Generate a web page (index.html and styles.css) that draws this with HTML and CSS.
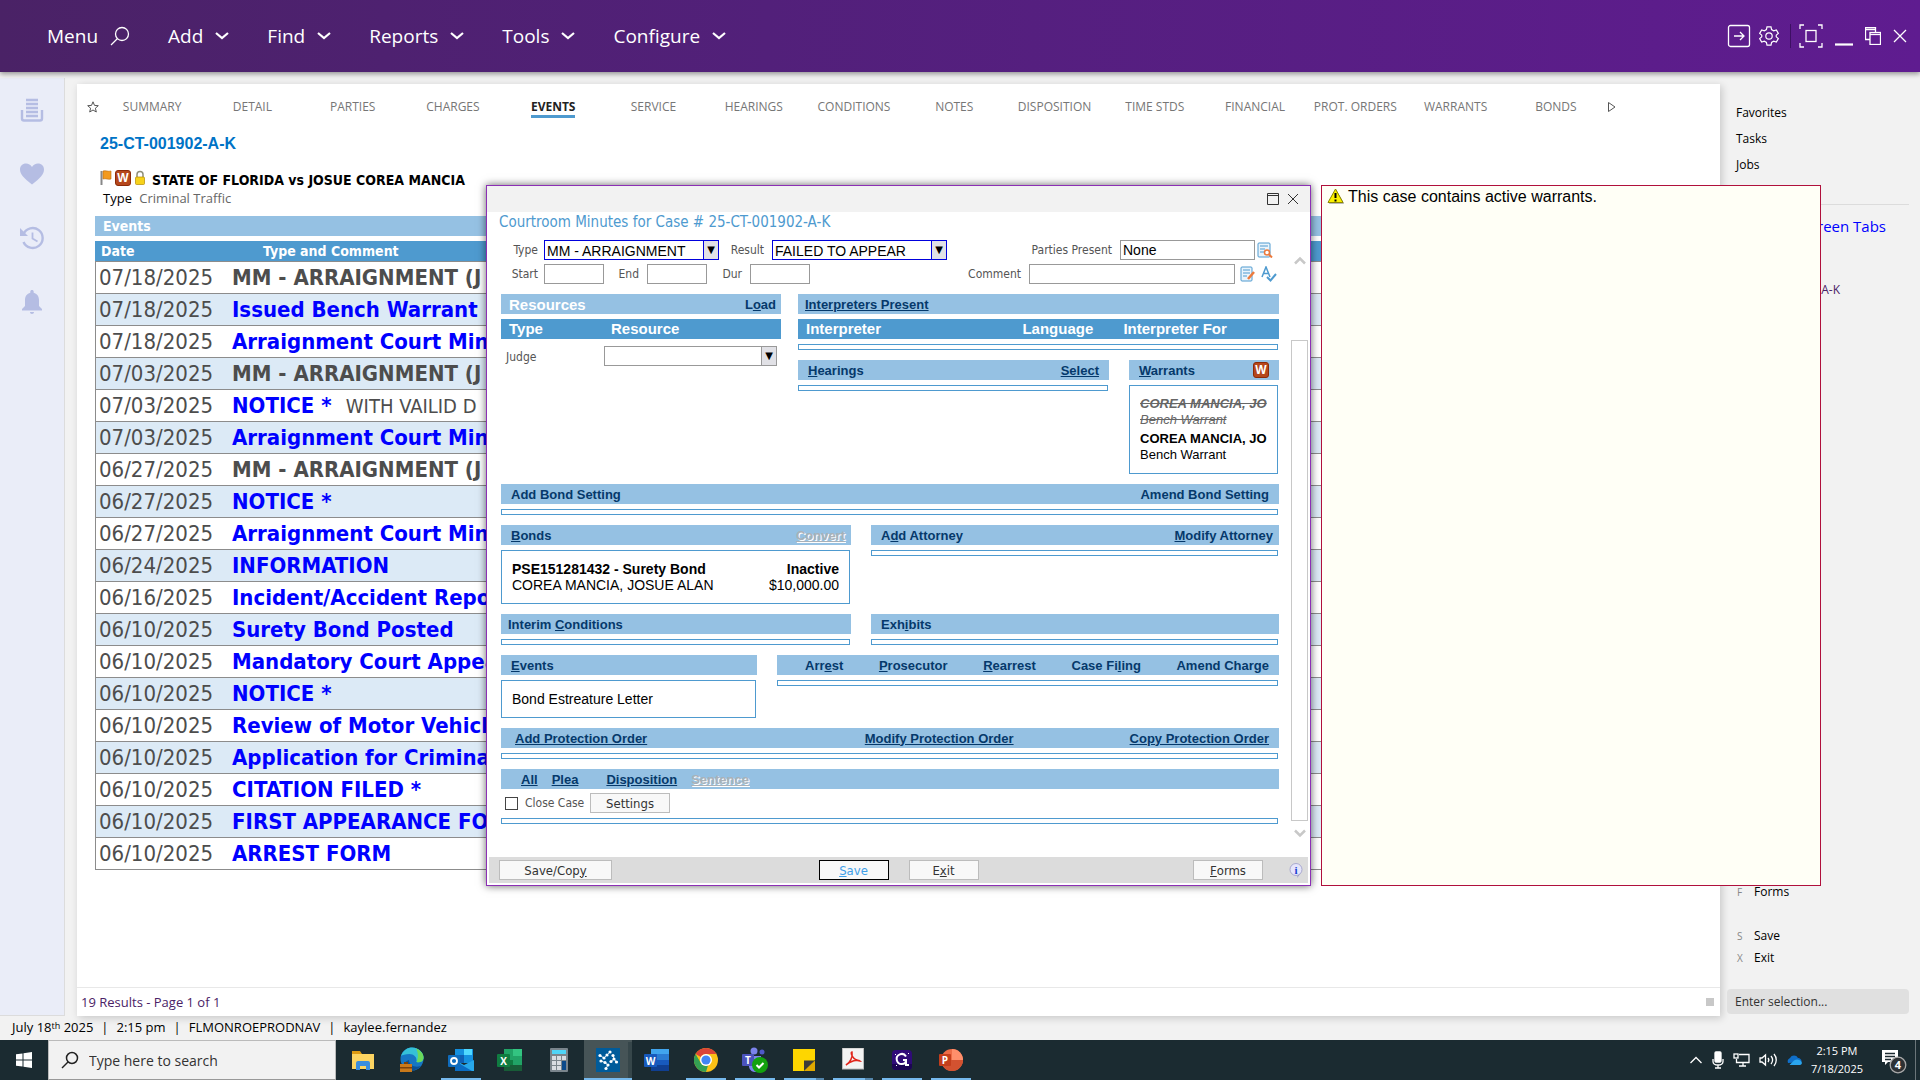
FILE: index.html
```html
<!DOCTYPE html>
<html lang="en">
<head>
    <meta charset="UTF-8">
    <meta name="viewport" content="width=device-width, initial-scale=1.0">
    <title>25-CT-001902-A-K</title>
    <link rel="stylesheet" href="styles.css">
</head>
<body>
    <!-- Top menu -->
    <header class="topbar">
        <nav class="menu">
            <button class="menu-search">Menu
                <svg width="20" height="20" viewBox="0 0 20 20"><circle cx="12" cy="8" r="6.5"/><path d="M7.5 12.5L1 19"/></svg>
            </button>
            <button>Add <svg width="14" height="8" viewBox="0 0 14 8"><path class="thick" d="M1 1l6 5 6-5"/></svg></button>
            <button>Find <svg width="14" height="8" viewBox="0 0 14 8"><path class="thick" d="M1 1l6 5 6-5"/></svg></button>
            <button>Reports <svg width="14" height="8" viewBox="0 0 14 8"><path class="thick" d="M1 1l6 5 6-5"/></svg></button>
            <button>Tools <svg width="14" height="8" viewBox="0 0 14 8"><path class="thick" d="M1 1l6 5 6-5"/></svg></button>
            <button>Configure <svg width="14" height="8" viewBox="0 0 14 8"><path class="thick" d="M1 1l6 5 6-5"/></svg></button>
        </nav>
        <div class="top-tools">
            <button aria-label="Sign out"><svg width="24" height="24" viewBox="0 0 24 24"><rect x="1.5" y="1.5" width="21" height="21" rx="2"/><path d="M7 12h10M13 8l4 4-4 4"/></svg></button>
            <button aria-label="Settings"><svg width="22" height="22" viewBox="0 0 24 24"><circle cx="12" cy="12" r="3.5"/><path d="M9.8 2h4.4l.6 3 2.3 1.3 2.9-1 2.2 3.8-2.3 2v1.8l2.3 2-2.2 3.8-2.9-1-2.3 1.3-.6 3H9.800l-.6-3-2.300-1.300-2.900 1-2.200-3.800 2.300-2v-1.800l-2.300-2L4 5.300l2.900 1L9.200 5z"/></svg></button>
        </div>
        <div class="window-tools">
            <button aria-label="Full screen"><svg width="24" height="24" viewBox="0 0 24 24"><rect x="7" y="6.500" width="10" height="11"/><path d="M1 5V1h4M19 1h4v4M23 19v4h-4M5 23H1v-4"/></svg></button>
            <button aria-label="Minimize"><svg width="18" height="20" viewBox="0 0 18 20"><path class="thick" d="M0 18.500h18"/></svg></button>
            <button aria-label="Restore"><svg width="16" height="18" viewBox="0 0 16 18"><path d="M5 12.500H.5v-12h10V5M.5 2.500h10"/><rect x="5" y="5.500" width="10.500" height="12"/><path d="M5 7.500h10.500"/></svg></button>
            <button aria-label="Close"><svg width="14" height="14" viewBox="0 0 14 14"><path d="M1 1l12 12M13 1L1 13"/></svg></button>
        </div>
    </header>

    <main class="workspace">
        <aside class="rail">
            <button aria-label="Print queue"><svg width="24" height="24" viewBox="0 0 24 24"><path class="line" d="M6 2h12M6 6h12M6 10h12M6 14h12M6 18h12"/><path class="line" d="M2 12v8.500a2 2 0 0 0 2 2h16a2 2 0 0 0 2-2V12"/></svg></button>
            <button aria-label="Favorites"><svg width="26" height="24" viewBox="0 0 26 24"><path d="M13 22.500C5 16.500 1 12 1 7.500 1 4 3.500 1.500 7 1.500c2.500 0 4.700 1.500 6 3.500 1.300-2 3.500-3.500 6-3.500 3.500 0 6 2.500 6 6 0 4.500-4 9-12 15z"/></svg></button>
            <button aria-label="History"><svg width="26" height="24" viewBox="0 0 26 24"><path class="line" d="M4.500 8A10 10 0 1 1 4.500 16"/><path d="M1 2v8h8z"/><path class="line thin" d="M13.500 6.500v6l5 3"/></svg></button>
            <button aria-label="Notifications"><svg width="24" height="24" viewBox="0 0 24 24"><path d="M12 0c1 0 1.700.7 1.700 1.700v1c3.300.8 5.300 3.500 5.300 7.300v6l3 3v1.500H2V19l3-3v-6c0-3.800 2-6.500 5.300-7.300v-1C10.300.7 11 0 12 0zM10 22h4c0 1.300-.8 2-2 2s-2-.7-2-2z"/></svg></button>
        </aside>

        <section class="panel">
            <nav class="tabs">
                <button class="tab-icon star" aria-label="Favorite"><svg width="12" height="12" viewBox="0 0 12 12"><path d="M6 .8l1.500 3.600 3.800.3-2.900 2.500.9 3.800L6 9l-3.300 2 .9-3.800L.7 4.700l3.800-.3z"/></svg></button>
                <a href="#">SUMMARY</a>
                <a href="#">DETAIL</a>
                <a href="#">PARTIES</a>
                <a href="#">CHARGES</a>
                <a href="#" class="active"><span>EVENTS</span></a>
                <a href="#">SERVICE</a>
                <a href="#">HEARINGS</a>
                <a href="#">CONDITIONS</a>
                <a href="#">NOTES</a>
                <a href="#">DISPOSITION</a>
                <a href="#">TIME STDS</a>
                <a href="#">FINANCIAL</a>
                <a href="#">PROT. ORDERS</a>
                <a href="#">WARRANTS</a>
                <a href="#">BONDS</a>
                <button class="tab-icon" aria-label="More tabs"><svg width="10" height="12" viewBox="0 0 10 12"><path d="M1.500 1.500v9L8 6z"/></svg></button>
            </nav>

            <div class="case">
                <h1>25-CT-001902-A-K</h1>
                <div class="case-title">
                    <svg width="12" height="16" viewBox="0 0 12 16"><path d="M1.500 1v14" stroke="#888" stroke-width="2"/><path d="M3 1c3-1 5 1 8 0v8c-3 1-5-1-8 0z" fill="#f39a1e" stroke="#b96a0c" stroke-width=".6"/></svg>
                    <span class="w-badge">W</span>
                    <svg width="12" height="16" viewBox="0 0 12 16"><path d="M3 8V4.500a3 3 0 0 1 6 0V8" fill="none" stroke="#8f8f7a" stroke-width="1.500"/><rect x="1.500" y="7" width="9" height="7.500" rx="1" fill="#f7d21a" stroke="#b58b00" stroke-width=".7"/></svg>
                    <h2>STATE OF FLORIDA vs JOSUE COREA MANCIA</h2>
                </div>
                <p class="case-type"><span>Type</span> Criminal Traffic</p>

                <h3 class="section-bar">Events</h3>
                <table class="events">
                    <thead>
                        <tr><th class="date">Date</th><th class="type">Type and Comment</th></tr>
                    </thead>
                    <tbody>
                        <tr><td>07/18/2025</td><td><b>MM - ARRAIGNMENT (J</b></td></tr>
                        <tr><td>07/18/2025</td><td><a href="#">Issued Bench Warrant</a></td></tr>
                        <tr><td>07/18/2025</td><td><a href="#">Arraignment Court Min</a></td></tr>
                        <tr><td>07/03/2025</td><td><b>MM - ARRAIGNMENT (J</b></td></tr>
                        <tr><td>07/03/2025</td><td><a href="#">NOTICE *</a> <span class="note">WITH VAILID D</span></td></tr>
                        <tr><td>07/03/2025</td><td><a href="#">Arraignment Court Min</a></td></tr>
                        <tr><td>06/27/2025</td><td><b>MM - ARRAIGNMENT (J</b></td></tr>
                        <tr><td>06/27/2025</td><td><a href="#">NOTICE *</a></td></tr>
                        <tr><td>06/27/2025</td><td><a href="#">Arraignment Court Min</a></td></tr>
                        <tr><td>06/24/2025</td><td><a href="#">INFORMATION</a></td></tr>
                        <tr><td>06/16/2025</td><td><a href="#">Incident/Accident Repo</a></td></tr>
                        <tr><td>06/10/2025</td><td><a href="#">Surety Bond Posted</a></td></tr>
                        <tr><td>06/10/2025</td><td><a href="#">Mandatory Court Appea</a></td></tr>
                        <tr><td>06/10/2025</td><td><a href="#">NOTICE *</a></td></tr>
                        <tr><td>06/10/2025</td><td><a href="#">Review of Motor Vehicl</a></td></tr>
                        <tr><td>06/10/2025</td><td><a href="#">Application for Crimina</a></td></tr>
                        <tr><td>06/10/2025</td><td><a href="#">CITATION FILED *</a></td></tr>
                        <tr><td>06/10/2025</td><td><a href="#">FIRST APPEARANCE FO</a></td></tr>
                        <tr><td>06/10/2025</td><td><a href="#">ARREST FORM</a></td></tr>
                    </tbody>
                </table>
            </div>

            <footer class="panel-footer">
                <span>19 Results - Page 1 of 1</span>
                <span class="grip"></span>
            </footer>
        </section>

        <aside class="sidebar">
            <ul class="side-links">
                <li><a href="#">Favorites</a></li>
                <li><a href="#">Tasks</a></li>
                <li><a href="#">Jobs</a></li>
            </ul>
            <hr>
            <a href="#" class="screen-tabs">Screen Tabs</a>
            <p class="side-case">25-CT-001902-A-K</p>
            <ul class="side-keys">
                <li><kbd>F</kbd><a href="#">Forms</a></li>
                <li class="gap"><kbd>S</kbd><a href="#">Save</a></li>
                <li><kbd>X</kbd><a href="#">Exit</a></li>
            </ul>
            <input type="text" class="selection" aria-label="Selection" placeholder="Enter selection...">
        </aside>
    </main>

    <div class="status">
        <span>July 18<small>th</small> 2025</span><span>2:15 pm</span><span>FLMONROEPRODNAV</span><span>kaylee.fernandez</span>
    </div>

    <!-- Windows taskbar -->
    <footer class="taskbar">
        <button class="start" aria-label="Start"><svg width="16" height="16" viewBox="0 0 16 16" fill="#fff"><path d="M0 2.300L6.500 1.400V7.500H0zM7.500 1.200L16 0v7.500H7.500zM0 8.500h6.500v6.100L0 13.700zM7.500 8.500H16V16l-8.500-1.200z"/></svg></button>
        <label class="search">
            <svg width="18" height="18" viewBox="0 0 18 18" fill="none" stroke="#222" stroke-width="1.500"><circle cx="11" cy="7" r="5.500"/><path d="M7 11l-6 6"/></svg>
            <input type="text" placeholder="Type here to search">
        </label>
        <div class="apps">
            <button aria-label="File Explorer"><svg width="24" height="24" viewBox="0 0 24 24"><path fill="#dd9a12" d="M1 3h8l2 3h12v4H1z"/><path fill="#fcd462" d="M1 6h22v15H1z"/><path fill="#3a8ede" d="M5 22v-7q0-2 2-2h10q2 0 2 2v7h-4v-4H9v4z"/></svg></button>
            <button aria-label="Edge"><svg width="26" height="26" viewBox="0 0 26 26"><circle cx="13" cy="12" r="11.500" fill="#1676c4"/><path fill="#35c1d8" d="M2 9C4 3 9 .5 13 .5 20 .5 25 6 24.500 11c-.4 4-4 5-7 4 1-5-3-8-7-8S3 8 2 9z"/><path fill="#6bd95a" d="M17 1.500c5 2 8 6 7.500 10-.5 3.500-4 4.300-7 3.500 2-4 2-9-.5-13.500z"/><path fill="#0c4f94" d="M10 13c0 5 5 8 12 6-3 4-8 5-12 4-5-2-7-8 0-10z"/><rect x="1" y="17" width="12" height="8" fill="#c9791a"/><path fill="#7a410a" d="M1 20h12v1.500H1zM5 15h4v2H5z"/></svg></button>
            <button class="open" aria-label="Outlook"><svg width="26" height="24" viewBox="0 0 26 24"><path fill="#1490df" d="M7 1h18v14H7z"/><path fill="#50d9ff" d="M16 1h8v6h-8z"/><path fill="#0f5fb5" d="M7 7h9v8H7z"/><path fill="#28a8ea" d="M7 12l9 5 10-5v11H7z"/><path fill="#0a6cc4" d="M7 13l17 10H7z"/><rect y="7" width="12" height="12" rx="1" fill="#0f6cbd"/><circle cx="6" cy="13" r="3" fill="none" stroke="#fff" stroke-width="1.800"/></svg></button>
            <button aria-label="Excel"><svg width="26" height="24" viewBox="0 0 26 24"><path fill="#21a366" d="M7 1h18v22H7z"/><path fill="#33c481" d="M16 1h9v7h-9z"/><path fill="#107c41" d="M7 12h9v5H7z"/><path fill="#185c37" d="M7 17h18v6H7z"/><rect y="6" width="13" height="13" rx="1" fill="#107c41"/><text x="6.500" y="16.500" class="letter">X</text></svg></button>
            <button aria-label="Calculator"><svg width="18" height="24" viewBox="0 0 18 24"><rect width="18" height="24" rx="1" fill="#7a858c"/><path fill="#4fd5f7" d="M2 2h14v4H2z"/><path fill="#d8dde2" d="M2 8h4v4H2zM7 8h4v4H7zM12 8h4v4h-4zM2 13h4v4H2zM7 13h4v4H7zM2 18h4v4H2zM7 18h4v4H7z"/><path fill="#0c4a8a" d="M12 13h4v9h-4z"/></svg></button>
            <button class="open current" aria-label="Court navigator"><svg width="24" height="24" viewBox="0 0 24 24"><rect width="24" height="24" fill="#005b9a"/><path d="M14 4L8 10l-4-2.500M5 13l4 1.500 3 2.500-2 3.500M15 13.500l3-2.500-1-3.500M18 11l2.500 3" fill="none" stroke="#fff" stroke-width=".8"/><g fill="#fff"><circle cx="14" cy="4" r="1.600"/><circle cx="11" cy="7" r="1.600"/><circle cx="8" cy="10" r="1.600"/><circle cx="4" cy="7.500" r="1.600"/><circle cx="5" cy="13" r="1.600"/><circle cx="9" cy="14.500" r="1.600"/><circle cx="12" cy="17" r="1.600"/><circle cx="10" cy="20.500" r="1.600"/><circle cx="15" cy="13.500" r="1.600"/><circle cx="18" cy="11" r="1.600"/><circle cx="17" cy="7.500" r="1.600"/><circle cx="20.500" cy="14" r="1.600"/></g></svg></button>
            <button aria-label="Word"><svg width="26" height="24" viewBox="0 0 26 24"><path fill="#41a5ee" d="M7 1h18v6H7z"/><path fill="#2b7cd3" d="M7 6h18v6H7z"/><path fill="#185abd" d="M7 12h18v6H7z"/><path fill="#103f91" d="M7 17h18v6H7z"/><rect y="6" width="13" height="13" rx="1" fill="#185abd"/><text x="6.500" y="16.500" class="letter">W</text></svg></button>
            <button class="open" aria-label="Chrome"><svg width="24" height="24" viewBox="0 0 24 24"><circle cx="12" cy="12" r="12" fill="#fbc116"/><path fill="#db4437" d="M12 0a12 12 0 0 1 10.400 6H12a6 6 0 0 0-5.200 3L1.600 6A12 12 0 0 1 12 0z"/><path fill="#34a053" d="M1.600 6l5.200 9a6 6 0 0 0 7.200 2.600L12 24A12 12 0 0 1 1.600 6z"/><circle cx="12" cy="12" r="6" fill="#fff"/><circle cx="12" cy="12" r="4.600" fill="#4285f4"/></svg></button>
            <button class="open" aria-label="Teams"><svg width="26" height="26" viewBox="0 0 26 26"><circle cx="12" cy="4" r="3.500" fill="#7b83eb"/><circle cx="20" cy="5" r="2.500" fill="#5059c9"/><path fill="#7b83eb" d="M7 9h12v9a6 6 0 0 1-12 2z"/><rect y="7" width="12" height="12" rx="1" fill="#4b53bc"/><text x="6" y="16.500" class="letter">T</text><circle cx="18" cy="18" r="8" fill="#13a10e"/><path d="M14.500 18l2.500 2.500 4.500-4.500" fill="none" stroke="#fff" stroke-width="2"/></svg></button>
            <button class="open multi" aria-label="Sticky Notes"><svg width="22" height="22" viewBox="0 0 22 22"><path fill="#fed600" d="M0 0h22v11L11 22H0z"/><path fill="#3b3a39" d="M11 11.500h11L11 22z"/><path fill="#e0a800" d="M22 11.500V22H11z"/></svg></button>
            <button class="open multi" aria-label="Acrobat"><svg width="22" height="24" viewBox="0 0 22 24"><rect x=".5" width="21" height="21" fill="#f3f3f3" stroke="#bbb"/><path d="M4 17c4-2 7-8 6-13-2 0 0 8 8 9-2-2-10 0-14 4z" fill="none" stroke="#e1251b" stroke-width="1.500"/></svg></button>
            <button class="open" aria-label="G app"><svg width="20" height="20" viewBox="0 0 20 20"><rect width="20" height="20" rx="4" fill="#2f0b78"/><path fill="#1c0554" d="M0 14h20v2a4 4 0 0 1-4 4H4a4 4 0 0 1-4-4z"/><path d="M14 6.500A5 5 0 1 0 10 14c3 0 4-1.500 4-4h-3M14 10v5h3" fill="none" stroke="#fff" stroke-width="2"/><path d="M3 4h1v1H3zM16 3h1v1h-1zM4 15h1v1H4z" fill="#fff"/></svg></button>
            <button class="open" aria-label="PowerPoint"><svg width="24" height="24" viewBox="0 0 24 24"><circle cx="13" cy="12" r="11" fill="#ed6c47"/><path fill="#ff8f6b" d="M13 1a11 11 0 0 1 11 11H13z"/><path fill="#d35230" d="M2 12h22a11 11 0 0 1-22 0z"/><rect y="6" width="12" height="12" rx="1" fill="#c43e1c"/><text x="6" y="16" class="letter">P</text></svg></button>
        </div>
        <div class="tray">
            <svg width="14" height="8" viewBox="0 0 14 8"><path d="M1.500 7L7 1.500 12.500 7"/></svg>
            <svg width="12" height="18" viewBox="0 0 12 18"><rect x="3" y="1" width="6" height="10" rx="1" fill="#fff"/><path d="M1 8v2.500c0 2 2 3.500 5 3.500s5-1.500 5-3.500V8M6 14v3M3 17h6"/></svg>
            <svg width="17" height="14" viewBox="0 0 17 14"><path d="M6 1.500h10v8H3.500V6M10 9.500V13M6 13h7"/><rect x="1" y="1" width="4" height="4"/></svg>
            <svg width="18" height="14" viewBox="0 0 18 14"><path d="M1 5v4h2l3.500 3V2L3 5zM9 5c1 1.200 1 2.800 0 4M12 3c2 2.500 2 5.500 0 8M15 1c3 3.500 3 8.500 0 12"/></svg>
            <svg class="cloud" width="16" height="10" viewBox="0 0 16 10"><path fill="#0f6fc9" d="M2 8A4 4 0 0 1 4 3a4.500 4.500 0 0 1 8 0c2 0 4 2 3.500 4z"/><path fill="#2aa5ee" d="M3.500 10L8 5.500c3-2 6-1 8 2 0 1.500-1 2.500-2 2.500z"/></svg>
            <div class="clock"><span>2:15 PM</span><span>7/18/2025</span></div>
            <button class="notices" aria-label="4 notifications">
                <svg width="26" height="28" viewBox="0 0 26 28"><path fill="#fff" stroke="none" d="M1 4h16v12H7l-3 3v-3H1z"/><path stroke="#1c2b31" d="M4 7.500h10M4 10.500h10M4 13.500h6"/><circle cx="17" cy="19" r="7.800" fill="#2d3134" stroke="#aaa"/><text x="17" y="23" class="letter">4</text></svg>
            </button>
        </div>
    </footer>

    <!-- Dialog and case message over the page -->
    <div class="overlay">
        <div class="dialog" role="dialog" aria-labelledby="dialogTitle">
            <div class="dialog-bar">
                <button aria-label="Maximize"><svg width="12" height="12" viewBox="0 0 12 12"><path d="M.5.5h11v11H.5zM.5 2.500h11"/></svg></button>
                <button aria-label="Close dialog"><svg width="12" height="12" viewBox="0 0 12 12"><path d="M1 1l10 10M11 1L1 11"/></svg></button>
            </div>
            <h2 id="dialogTitle">Courtroom Minutes for Case # 25-CT-001902-A-K</h2>
            <div class="dialog-body">
                <form class="minutes">
                    <div class="fields">
                        <label for="type" class="first">Type</label>
                        <span class="select required"><select id="type"><option>MM - ARRAIGNMENT</option></select></span>
                        <label for="result">Result</label>
                        <span class="select required"><select id="result"><option>FAILED TO APPEAR</option></select></span>
                        <label for="parties" class="push">Parties Present</label>
                        <input type="text" id="parties" value="None">
                        <button type="button" class="icon last-one" aria-label="Find parties"><svg width="16" height="16" viewBox="0 0 16 16"><rect x="1" y="1" width="12" height="14" rx="1" fill="#e9f4fc" stroke="#4e9acf"/><path d="M3 4h8M3 7h5M3 10h4" stroke="#4e9acf"/><circle cx="10" cy="10.500" r="2.500" fill="#fff" stroke="#ec7a3c" stroke-width="1.500"/><path d="M12 12.500l3 3" stroke="#ec7a3c" stroke-width="2"/></svg></button>
                    </div>
                    <div class="fields">
                        <label for="start" class="first">Start</label>
                        <input type="text" id="start" class="short">
                        <label for="end" class="mid">End</label>
                        <input type="text" id="end" class="short">
                        <label for="dur" class="mid">Dur</label>
                        <input type="text" id="dur" class="short">
                        <label for="comment" class="push">Comment</label>
                        <input type="text" id="comment" class="long">
                        <button type="button" class="icon" aria-label="Edit comment"><svg width="16" height="16" viewBox="0 0 16 16"><rect x="1" y="1" width="11" height="14" rx="1" fill="#e9f4fc" stroke="#4e9acf"/><path d="M3 4h7M3 7h7M3 10h4" stroke="#4e9acf"/><path d="M14 6l-6 7" stroke="#ec7a3c" stroke-width="2.500"/></svg></button>
                        <button type="button" class="icon" aria-label="Check spelling"><svg width="16" height="16" viewBox="0 0 16 16"><path d="M1 11L5 1l4 10M2.500 7.500h5" fill="none" stroke="#4e9acf" stroke-width="1.500"/><path d="M6 11l3.500 3.500L15 8" fill="none" stroke="#4e9acf" stroke-width="2"/></svg></button>
                    </div>

                    <div class="columns resources">
                        <section>
                            <div class="bar title"><span>Resources</span><a href="#">L<u>o</u>ad</a></div>
                            <table class="grid">
                                <thead><tr><th class="col-type">Type</th><th>Resource</th></tr></thead>
                                <tbody><tr><td><label for="judge">Judge</label></td><td class="judge"><span class="select"><select id="judge"><option></option></select></span></td></tr></tbody>
                            </table>
                        </section>
                        <section>
                            <div class="bar tight"><a href="#" class="line">Interpreters Present</a></div>
                            <table class="grid">
                                <thead><tr><th class="col-name">Interpreter</th><th class="col-language">Language</th><th>Interpreter For</th></tr></thead>
                            </table>
                            <div class="box"></div>
                            <div class="columns hearings">
                                <section>
                                    <div class="bar"><a href="#"><u>H</u>earings</a><a href="#" class="line">Select</a></div>
                                    <div class="box"></div>
                                </section>
                                <section>
                                    <div class="bar"><a href="#"><u>W</u>arrants</a><span class="w-badge">W</span></div>
                                    <div class="box warrants">
                                        <p class="served"><b>COREA MANCIA, JO</b>Bench Warrant</p>
                                        <p><b>COREA MANCIA, JO</b>Bench Warrant</p>
                                    </div>
                                </section>
                            </div>
                        </section>
                    </div>

                    <section>
                        <div class="bar"><a href="#">Add Bond Setting</a><a href="#">Amend Bond Setting</a></div>
                        <div class="box"></div>
                    </section>

                    <div class="columns halves">
                        <section>
                            <div class="bar short-end"><a href="#"><u>B</u>onds</a><span class="disabled">Convert</span></div>
                            <div class="box bond">
                                <p><b>PSE151281432 - Surety Bond</b>COREA MANCIA, JOSUE ALAN</p>
                                <p class="amount"><b>Inactive</b>$10,000.00</p>
                            </div>
                        </section>
                        <section>
                            <div class="bar short-end"><a href="#">A<u>d</u>d Attorney</a><a href="#"><u>M</u>odify Attorney</a></div>
                            <div class="box"></div>
                        </section>
                    </div>

                    <div class="columns halves">
                        <section>
                            <div class="bar tight"><a href="#">Interim <u>C</u>onditions</a></div>
                            <div class="box"></div>
                        </section>
                        <section>
                            <div class="bar"><a href="#">Exh<u>i</u>bits</a></div>
                            <div class="box"></div>
                        </section>
                    </div>

                    <div class="columns filings">
                        <section>
                            <div class="bar"><a href="#"><u>E</u>vents</a></div>
                            <div class="box letter-box">Bond Estreature Letter</div>
                        </section>
                        <section>
                            <div class="bar wide-start"><a href="#">Arr<u>e</u>st</a><a href="#"><u>P</u>rosecutor</a><a href="#"><u>R</u>earrest</a><a href="#">Case Fi<u>l</u>ing</a><a href="#">Amend Char<u>g</u>e</a></div>
                            <div class="box"></div>
                        </section>
                    </div>

                    <section>
                        <div class="bar protection"><a href="#" class="line">Add Protection Order</a><a href="#" class="line modify">Modify Protection Order</a><a href="#" class="line">Copy Protection Order</a></div>
                        <div class="box"></div>
                    </section>

                    <section>
                        <div class="bar charges">
                            <a href="#" class="line">All</a><a href="#" class="line plea">Plea</a><a href="#" class="line">Disposition</a><span class="disabled">Sentence</span>
                        </div>
                        <div class="close-row">
                            <input type="checkbox" id="closeCase"><label for="closeCase">Close Case</label>
                            <button type="button" class="btn">Settings</button>
                        </div>
                        <div class="box"></div>
                    </section>
                </form>
                <div class="scroll">
                    <svg width="12" height="9" viewBox="0 0 12 9"><path d="M1 7.500l5-5 5 5"/></svg>
                    <div class="thumb"></div>
                    <svg width="12" height="9" viewBox="0 0 12 9"><path d="M1 1.500l5 5 5-5"/></svg>
                </div>
            </div>
            <div class="actions">
                <button class="btn wide">Save/Cop<u>y</u></button>
                <div class="center">
                    <button class="btn primary"><u>S</u>ave</button>
                    <button class="btn">E<u>x</u>it</button>
                </div>
                <button class="btn"><u>F</u>orms</button>
                <button class="info" aria-label="Information"><svg width="14" height="15" viewBox="0 0 14 15"><path d="M9 11l-1 4 4-5z" fill="#9a9ac8"/><circle cx="7" cy="6.500" r="6" fill="#e6e6fb" stroke="#a9a9cf"/><text x="7" y="10.500">i</text></svg></button>
            </div>
        </div>

        <div class="message">
            <svg width="18" height="17" viewBox="0 0 18 17"><path d="M9 1.500L17 15.500H2z" fill="#777"/><path d="M8.500 1L16 14.500H1z" fill="#fbf100" stroke="#8d8700"/><path d="M8.500 5v5M8.500 11.500v2" stroke="#000" stroke-width="2"/></svg>
            <span>This case contains active warrants.</span>
        </div>
    </div>
</body>
</html>
```
FILE: styles.css
```css
* {
    box-sizing: border-box;
}

body {
    margin: 0;
    height: 100vh;
    display: flex;
    flex-direction: column;
    overflow: hidden;
    background: #f2f2f2;
    font-family: "Open Sans", sans-serif;
    font-size: 13px;
    color: #000;
}

h1, h2, h3, p, ul {
    margin: 0;
    padding: 0;
    list-style: none;
}

button {
    padding: 0;
    border: none;
    background: none;
    color: inherit;
    font: inherit;
    display: flex;
    align-items: center;
    justify-content: center;
}

a {
    color: inherit;
    text-decoration: none;
}

svg {
    flex: none;
}

/* Top menu */
.topbar {
    flex: none;
    height: 72px;
    padding: 0 13px 0 47px;
    display: flex;
    align-items: center;
    background: linear-gradient(to right, #4a2266, #52207a 40%, #5f1c90);
    box-shadow: 0 2px 5px rgba(0, 0, 0, 0.4);
    color: #fff;
    z-index: 1;
}

.topbar svg {
    fill: none;
    stroke: #fff;
    stroke-width: 1.3;
}

.topbar .thick {
    stroke-width: 2.2;
}

.menu {
    flex: 1;
    display: flex;
    gap: 38px;
    font-size: 19px;
}

.menu button {
    gap: 12px;
}

.top-tools, .window-tools {
    display: flex;
    align-items: center;
}

.top-tools {
    gap: 7px;
    padding-right: 10px;
}

.window-tools {
    gap: 12px;
    padding-left: 8px;
    border-left: 1px solid #3d0f63;
}

/* Workspace */
.workspace {
    flex: 1;
    display: flex;
    min-height: 0;
}

.rail {
    width: 65px;
    margin-top: 6px;
    padding-top: 20px;
    display: flex;
    flex-direction: column;
    align-items: center;
    gap: 40px;
    background: #eaedf8;
    border-right: 1px solid #dcdcdc;
    border-bottom: 1px solid #dcdcdc;
}

.rail svg {
    fill: #b5bde3;
}

.rail .line {
    fill: none;
    stroke: #b5bde3;
    stroke-width: 2.4;
}

.rail .thin {
    stroke-width: 1.8;
}

.panel {
    flex: 1;
    min-width: 0;
    margin: 12px 0 0 12px;
    display: flex;
    flex-direction: column;
    background: #fff;
    box-shadow: 2px 2px 8px rgba(0, 0, 0, 0.18);
}

.tabs {
    display: flex;
    align-items: center;
    height: 45px;
    padding: 0 102px 0 10px;
    color: #767676;
    font-size: 12px;
}

.tabs a {
    flex: 1;
    text-align: center;
    white-space: nowrap;
}

.tabs .active {
    color: #222;
    font-weight: bold;
}

.tabs .active span {
    border-bottom: 3px solid #4e9acf;
}

.tab-icon {
    width: 12px;
}

.tab-icon.star {
    width: 15px;
    justify-content: flex-start;
}

.tab-icon svg {
    fill: none;
    stroke: #555;
}

.case {
    flex: 1;
    min-height: 0;
    padding: 5px 18px 0;
}

.case h1 {
    padding-left: 5px;
    font: bold 16px/20px "Liberation Sans", sans-serif;
    color: #0073c6;
}

.case-title {
    display: flex;
    align-items: center;
    gap: 3px;
    margin-top: 14px;
    padding-left: 5px;
    height: 20px;
}

.case-title h2 {
    padding: 4px 0 0 3px;
    font-size: 14px;
    font-family: "DejaVu Sans Condensed", "DejaVu Sans", sans-serif;
}

.w-badge {
    width: 16px;
    height: 16px;
    border: 1px solid #8c2a08;
    border-radius: 3px;
    background: #b5471c;
    color: #fff;
    font: bold 12px/14px "Liberation Sans", sans-serif;
    text-align: center;
}

.case-type {
    padding: 0 0 8px 8px;
    font-size: 13px;
    line-height: 20px;
    color: #666;
}

.case-type span {
    margin-right: 4px;
    color: #000;
}

.section-bar {
    height: 20px;
    padding-left: 8px;
    background: #95c1e3;
    color: #fff;
    font: bold 14px/20px "DejaVu Sans Condensed", "DejaVu Sans", sans-serif;
}

.events {
    width: 100%;
    margin-top: 5px;
    border-spacing: 0;
    font-family: "DejaVu Sans Condensed", "DejaVu Sans", sans-serif;
    font-size: 22px;
    color: #4d4d4d;
}

.events th {
    height: 20px;
    padding: 0 6px;
    background: #4e9acf;
    color: #fff;
    font-size: 14px;
    line-height: 20px;
    text-align: left;
}

.events .date {
    width: 134px;
}

.events .type {
    padding-left: 34px;
}

.events td {
    height: 32px;
    padding: 0 3px;
    border-top: 1px solid #8c8c8c;
    line-height: 31px;
    white-space: nowrap;
}

.events td:first-child {
    border-left: 1px solid #8c8c8c;
}

.events tr:last-child td {
    border-bottom: 1px solid #8c8c8c;
}

.events tbody tr:nth-child(even) {
    background: #dceaf6;
}

.events a {
    color: #0000ff;
    font-weight: bold;
}

.note {
    margin-left: 8px;
    font-size: 20px;
    line-height: 1;
}

.panel-footer {
    height: 29px;
    padding: 0 6px 0 4px;
    display: flex;
    align-items: center;
    justify-content: space-between;
    border-top: 1px solid #e8e8e8;
    color: #4a2266;
}

.grip {
    width: 8px;
    height: 8px;
    background: #c8c8c8;
}

/* Right column */
.sidebar {
    width: 200px;
    padding: 28px 11px 2px 7px;
    display: flex;
    flex-direction: column;
    font-size: 12px;
}

.side-links {
    padding-left: 9px;
    line-height: 26px;
}

.sidebar hr {
    width: 100%;
    margin: 26px 0 9px;
    border: none;
    border-top: 1px solid #dcdcdc;
}

.screen-tabs {
    padding-right: 23px;
    color: #0000ff;
    font-size: 15px;
    line-height: 24px;
    text-align: right;
}

.side-case {
    margin-top: 40px;
    padding-right: 69px;
    line-height: 24px;
    color: #4a2266;
    text-align: right;
}

.side-keys {
    margin-top: auto;
    padding-left: 10px;
    line-height: 22px;
}

.side-keys li {
    display: flex;
}

.side-keys .gap {
    margin-top: 22px;
}

.side-keys kbd {
    width: 17px;
    font-family: inherit;
    font-size: 10px;
    color: #888;
}

.selection {
    height: 25px;
    margin-top: 20px;
    padding: 0 8px;
    border: none;
    border-radius: 4px;
    background: #e0e0e0;
    font: inherit;
    font-size: 12px;
}

.selection::placeholder {
    color: #333;
}

.status {
    flex: none;
    height: 24px;
    padding-left: 12px;
    display: flex;
    font-size: 13px;
    line-height: 22px;
}

.status span + span::before {
    content: "|";
    margin: 0 8px;
}

.status small {
    font-size: 9px;
    vertical-align: 3px;
    line-height: 1;
}

/* Taskbar */
.taskbar {
    flex: none;
    height: 40px;
    display: flex;
    background: #1b2b31;
    color: #fff;
}

.start {
    width: 48px;
}

.search {
    width: 288px;
    padding-left: 12px;
    display: flex;
    align-items: center;
    gap: 8px;
    background: #f2f2f2;
    border: 1px solid #bbb;
    border-bottom-color: #999;
}

.search input {
    flex: 1;
    min-width: 0;
    border: none;
    background: none;
    font: inherit;
    font-size: 14px;
}

.search input::placeholder {
    color: #333;
}

.apps {
    flex: 1;
    padding-left: 3px;
    display: flex;
    gap: 1px;
}

.apps button {
    width: 48px;
    border-top: 2px solid transparent;
    border-bottom: 2px solid transparent;
}

.apps .open {
    border-bottom-color: #76b9ed;
    border-image: linear-gradient(to right, transparent 4px, #76b9ed 4px, #76b9ed 44px, transparent 44px) 0 0 2 0;
}

.apps .multi {
    border-image: linear-gradient(to right, transparent 4px, #76b9ed 4px, #76b9ed 36px, #5485ab 36px, #5485ab 44px, transparent 44px) 0 0 2 0;
}

.apps .current {
    background: #465457;
    border-image: none;
    box-shadow: inset -4px 0 #36464a;
}

.letter {
    fill: #fff;
    stroke: none;
    font: bold 10px "Open Sans", sans-serif;
    text-anchor: middle;
}

.tray {
    display: flex;
    align-items: center;
    gap: 9px;
    padding-right: 4px;
}

.tray svg {
    fill: none;
    stroke: #fff;
    stroke-width: 1.3;
}

.tray .cloud {
    stroke: none;
}

.clock {
    display: flex;
    flex-direction: column;
    font-size: 11px;
    line-height: 18px;
    text-align: center;
}

.notices {
    width: 44px;
    border-right: 1px solid #6b7579;
    height: 40px;
}

.notices .letter {
    font-size: 11px;
}

/* Dialog */
.overlay {
    position: absolute;
    top: 185px;
    left: 486px;
    right: 99px;
    z-index: 2;
    display: flex;
    gap: 10px;
    font-family: "Liberation Sans", sans-serif;
}

.dialog {
    flex: 1;
    min-width: 0;
    padding: 0 2px 2px;
    border: 1px solid #8c2fb5;
    background: #fff;
    box-shadow: 0 0 8px rgba(0, 0, 0, 0.6);
}

.dialog-bar {
    height: 26px;
    margin: 0 -2px;
    padding-right: 11px;
    display: flex;
    align-items: center;
    justify-content: flex-end;
    gap: 8px;
    background: #f2f2f2;
}

.dialog-bar svg {
    fill: none;
    stroke: #333;
}

.dialog h2 {
    padding-left: 10px;
    font: 15px/20px "DejaVu Sans Condensed", "DejaVu Sans", sans-serif;
    color: #4e9acf;
}

.dialog-body {
    display: flex;
    padding-bottom: 33px;
}

.minutes {
    flex: 1;
    min-width: 0;
    padding: 8px 12px 0;
    display: flex;
    flex-direction: column;
    gap: 10px;
}

.fields {
    display: flex;
    align-items: center;
    height: 20px;
}

.fields + .fields {
    margin-top: -6px;
    padding-right: 2px;
}

.minutes label {
    font: 12px/18px "DejaVu Sans Condensed", "DejaVu Sans", sans-serif;
    color: #555;
}

.fields label {
    width: 53px;
    padding-right: 8px;
    text-align: right;
    white-space: nowrap;
}

.fields .first {
    width: 43px;
    padding-right: 6px;
}

.fields .mid {
    width: 43px;
}

.fields .push {
    width: auto;
    margin-left: auto;
}

.fields input {
    width: 135px;
    height: 20px;
    padding: 0 2px;
    border: 1px solid #999;
    font: 14px "Liberation Sans", sans-serif;
}

.fields .short {
    width: 60px;
}

.fields .long {
    width: 206px;
}

.icon {
    width: 16px;
    margin-left: 5px;
}

.fields .last-one {
    margin: 0 6px 0 2px;
}

.select {
    position: relative;
    display: flex;
    width: 175px;
    height: 20px;
    border: 1px solid #999;
    background: #fff;
}

.select select {
    width: 100%;
    padding: 1px 2px 0;
    border: none;
    background: none;
    appearance: none;
    font: 14px "Liberation Sans", sans-serif;
    color: #000;
}

.select::after {
    content: "\25BC";
    position: absolute;
    top: 0;
    right: 0;
    bottom: 0;
    width: 14px;
    border-left: 1px solid #999;
    background: #e1e1e6;
    font: 10px/18px "DejaVu Sans", sans-serif;
    text-align: center;
    pointer-events: none;
}

.required, .required::after {
    border-color: #0000dd;
}

.columns {
    display: grid;
    column-gap: 20px;
}

.resources {
    grid-template-columns: 280px 1fr;
    column-gap: 17px;
}

.hearings {
    grid-template-columns: 1fr 150px;
    margin-top: 10px;
}

.halves {
    grid-template-columns: 350px 1fr;
}

.filings {
    grid-template-columns: 256px 1fr;
}

.columns > section {
    min-width: 0;
}

.bar {
    display: flex;
    align-items: center;
    justify-content: space-between;
    height: 20px;
    padding: 0 10px;
    background: #95c1e3;
    color: #05396b;
    font-size: 13px;
    font-weight: bold;
    white-space: nowrap;
}

.bar.title {
    padding: 0 5px 0 8px;
}

.bar.title span {
    color: #fff;
    font-size: 15px;
}

.bar.tight {
    padding-left: 7px;
}

.bar.short-end {
    padding-right: 6px;
}

.bar.wide-start {
    padding-left: 28px;
}

.bar.protection {
    padding-left: 14px;
}

.modify {
    margin: 0 116px 0 auto;
}

.bar.charges {
    justify-content: flex-start;
    gap: 14px;
    padding-left: 20px;
}

.plea {
    margin-right: 14px;
}

.line {
    text-decoration: underline;
}

.disabled {
    color: #a9b1b8;
    text-decoration: underline;
    text-shadow: 1px 1px #fff;
}

.grid {
    width: 100%;
    margin-top: 5px;
    border-spacing: 0;
    table-layout: fixed;
}

.grid th {
    height: 20px;
    padding: 0 8px;
    background: #4e9acf;
    color: #fff;
    font-size: 15px;
    line-height: 20px;
    text-align: left;
}

.grid td {
    padding: 8px 5px 0;
}

.grid .judge {
    padding: 7px 4px 0 1px;
}

.judge .select {
    width: auto;
}

.col-type {
    width: 102px;
}

.col-name {
    width: 45%;
}

.col-language {
    width: 21%;
}

.box {
    min-height: 6px;
    margin: 5px 1px 0 0;
    border: 1px solid #4e9acf;
    font-size: 14px;
    line-height: 16px;
}

.box p {
    overflow: hidden;
    white-space: nowrap;
}

.box b {
    display: block;
}

.warrants {
    padding: 10px;
}

.warrants p {
    margin-bottom: 3px;
    font-size: 13px;
}

.warrants p:last-child {
    margin-bottom: 0;
}

.served {
    color: #666;
    font-style: italic;
    text-decoration: line-through;
}

.bond {
    height: 54px;
    display: flex;
    justify-content: space-between;
    padding: 10px;
}

.amount {
    text-align: right;
}

.letter-box {
    padding: 10px;
}

.close-row {
    display: flex;
    align-items: center;
    padding: 4px 0 0 4px;
}

.close-row input {
    width: 13px;
    height: 13px;
    margin: 0;
    appearance: none;
    border: 1px solid #444;
    background: #fff;
}

.close-row label {
    width: 72px;
    padding-left: 7px;
    white-space: nowrap;
}

.btn {
    width: 70px;
    height: 20px;
    border: 1px solid #bcbcbc;
    background: #f8f8f8;
    color: #333;
    font: 13px "DejaVu Sans Condensed", "DejaVu Sans", sans-serif;
}

.close-row .btn {
    width: 80px;
}

.scroll {
    width: 17px;
    padding-top: 24px;
    display: flex;
    flex-direction: column;
    align-items: center;
    margin-bottom: -14px;
}

.scroll svg {
    fill: none;
    stroke: #c8c8c8;
    stroke-width: 2.5;
}

.thumb {
    flex: 1;
    width: 17px;
    margin: 75px 0 8px;
    border: 1px solid #c8c8c8;
}

.actions {
    display: flex;
    align-items: center;
    height: 26px;
    padding: 0 5px 0 10px;
    background: #dcdcdc;
}

.btn.wide {
    width: 113px;
}

.center {
    flex: 1;
    display: flex;
    justify-content: center;
    gap: 20px;
    padding-right: 8px;
}

.btn.primary {
    border-color: #000;
    color: #3f9fe8;
}

.info {
    margin-left: 26px;
}

.info text {
    fill: #1a3fd0;
    font: bold 11px "Liberation Serif", serif;
    text-anchor: middle;
}

.message {
    width: 500px;
    padding: 2px 5px;
    display: flex;
    gap: 3px;
    border: 1px solid #b0103c;
    background: #fffff6;
    font-size: 16px;
    line-height: 18px;
}
```
